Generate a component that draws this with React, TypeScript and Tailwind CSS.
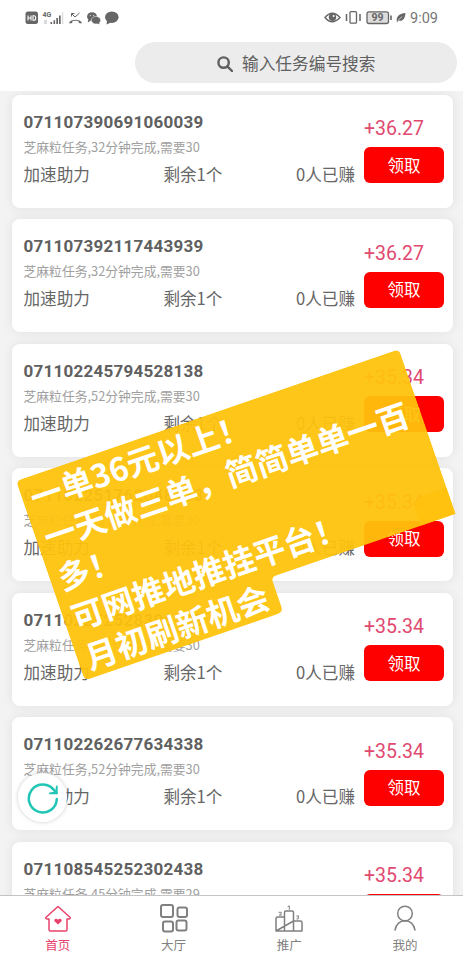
import type { ReactNode } from "react";
import clsx from "clsx";

interface Task {
  id: string;
  minutes: number;
  need: number;
  price: string;
}

const tasks: Task[] = [
  { id: "071107390691060039", minutes: 32, need: 30, price: "+36.27" },
  { id: "071107392117443939", minutes: 32, need: 30, price: "+36.27" },
  { id: "071102245794528138", minutes: 52, need: 30, price: "+35.34" },
  { id: "071102251762648138", minutes: 52, need: 30, price: "+35.34" },
  { id: "071102252528396138", minutes: 52, need: 30, price: "+35.34" },
  { id: "071102262677634338", minutes: 52, need: 30, price: "+35.34" },
  { id: "071108545252302438", minutes: 45, need: 29, price: "+35.34" },
];

function StatusBar() {
  return (
    <div className="flex h-[35px] shrink-0 items-center justify-between pl-[25px] pr-[25px] text-[#666]">
      <svg width="96" height="18" viewBox="0 0 96 18" fill="currentColor">
        <rect x="0.5" y="2.5" width="12.5" height="12.5" rx="2.5" />
        <path d="M3 6.5v5M6 6.5v5M3 9h3M8 6.7v4.6h1q1.7 0 1.7-2.3T9 6.7z" stroke="#fff" strokeWidth="1.1" fill="none" />
        <text x="17.5" y="7.500" fontSize="7" fontWeight="700" fontFamily="Roboto, sans-serif">4G</text>
        <path d="M25.5 13h1.6v2h-1.6zM28.5 11.3h1.6V15h-1.6zM31.3 9h1.7v6h-1.7zM34 6.5h1.7V15H34z" />
        <path d="M37 3h1.200v12H37zM19 11h3v4h-3z" opacity=".25" />
        <path d="M44.500 14.500c-.8-1 .4-2.200 2-3 2.500-1.100 5.500-1.100 8 0 1.600.8 2.800 2 2 3l-2.600-.6-.4-1.700c-2-.6-4-.6-6 0l-.4 1.700z" />
        <path d="M46.500 4.500l3.500 3.500 4.500-4M46.500 7.500v-3h3" fill="none" stroke="currentColor" strokeWidth="1" />
        <ellipse cx="67" cy="7.500" rx="5" ry="4.300" />
        <path d="M63.500 10l-.8 3.500 3-1.800z" />
        <ellipse cx="71" cy="11.200" rx="4.600" ry="3.800" stroke="#fff" strokeWidth=".5" />
        <path d="M72 14l2.500 1.600-.5-2.500z" />
        <circle cx="65.300" cy="6.600" r=".5" fill="#fff" />
        <circle cx="68.700" cy="6.600" r=".5" fill="#fff" />
        <ellipse cx="86.800" cy="8.200" rx="6.800" ry="5.800" />
        <path d="M82 11.500l-.5 4 4.500-2z" />
      </svg>
      <div className="flex items-center">
        <svg width="84" height="18" viewBox="0 0 84 18" fill="none" stroke="currentColor">
          <path d="M1 8.500q7-8.500 15 0-8 8.500-15 0z" strokeWidth="1.400" />
          <circle cx="8.500" cy="8.300" r="3.700" fill="currentColor" stroke="none" />
          <circle cx="9.600" cy="7" r="1" fill="#fff" stroke="none" />
          <rect x="26" y="2.700" width="6.500" height="11.500" rx="1" strokeWidth="1.300" />
          <path d="M22.500 5v7M36 5v7" strokeWidth="1.500" />
          <rect x="43" y="2.800" width="21.500" height="11.700" rx="2" fill="#ddd" strokeWidth="1.300" />
          <path d="M67 6.500v4.500" strokeWidth="1.600" />
          <text x="47.500" y="12.400" fontSize="10.500" fontWeight="700" fontFamily="Roboto, sans-serif" fill="currentColor" stroke="none">99</text>
          <path d="M73 13c-1.500-6 3-8.500 8.500-9-.3 5.500-3 9-7 7.500L72.500 14z" fill="currentColor" stroke="none" />
          <path d="M74 11.500l4-4" stroke="#fff" strokeWidth=".7" />
        </svg>
        <span className="ml-0.5 pt-[3px] font-[Roboto,sans-serif] text-[14.500px] leading-none text-[#777]">9:09</span>
      </div>
    </div>
  );
}

function SearchBar() {
  return (
    <div className="flex h-14 shrink-0 pl-[135px] pr-1.5 pt-[7px]">
      <div className="flex h-[41px] w-full items-center rounded-full bg-[#ececec] pl-[82px] text-[#606060]">
        <svg className="mt-0.5" width="16" height="16" viewBox="0 0 16 16" fill="none" stroke="currentColor" strokeWidth="2.400">
          <circle cx="6.600" cy="6.600" r="5.200" />
          <path d="M10.300 10.300l4.700 4.700" strokeLinecap="round" />
        </svg>
        <span className="ml-[9px] mt-0.5 whitespace-nowrap text-[16.700px]">输入任务编号搜索</span>
      </div>
    </div>
  );
}

function TaskCard({ task }: { task: Task }) {
  return (
    <div className="flex h-[113px] shrink-0 rounded-lg bg-white pl-[11.500px] shadow-[0_0_12px_rgba(0,0,0,0.08)]">
      <div className="w-[331.500px] pt-4">
        <div className="font-[Roboto,sans-serif] text-[17px] font-bold leading-[22px] tracking-[0.250px] text-[#606060]">{task.id}</div>
        <div className="mt-[5px] text-[12.800px] leading-[18px] text-[#a0a0a0]">
          芝麻粒任务,{task.minutes}分钟完成,需要{task.need}
        </div>
        <div className="mt-1.5 flex justify-between text-[16.600px] leading-6 text-[#666]">
          <span>加速助力</span>
          <span>剩余1个</span>
          <span>0人已赚</span>
        </div>
      </div>
      <div className="ml-[9px] w-20 pt-[22.500px]">
        <div className="font-[Roboto,sans-serif] text-[19.500px] leading-6 text-[#e04a70]">{task.price}</div>
        <button className="mt-1.5 flex h-9 w-20 items-center justify-center rounded-md bg-[#fe0000] text-[16.500px] text-white">
          领取
        </button>
      </div>
    </div>
  );
}

function PromoBanner() {
  return (
    <div className="absolute left-[15.500px] top-[481px] w-[405px] origin-top-left -rotate-[19deg] text-[32px] font-bold leading-[42.300px] text-white">
      <svg className="absolute left-0 top-0" width="405" height="212" viewBox="0 0 405 212">
        <path
          d="M6 0H399Q405 0 405 6V174H215Q210 174 210 179V205Q210 211 204 211H6Q0 211 0 205V6Q0 0 6 0z"
          fill="#ffc20c"
          fillOpacity=".94"
        />
        <path d="M368 160q0-14 14-14h23v28h-37z" fill="#ffc20c" fillOpacity=".7" />
      </svg>
      <div className="relative -mt-px whitespace-nowrap pl-[8.500px]">
        <p>一单36元以上！</p>
        <p>一天做三单，简简单单一百</p>
        <p>多！</p>
        <p>可网推地推挂平台！</p>
        <p>月初刷新机会</p>
      </div>
    </div>
  );
}

function NavItem({ label, active, children }: { label: string; active?: boolean; children: ReactNode }) {
  return (
    <div className={clsx("flex flex-1 flex-col items-center pt-[7px]", active ? "text-[#e8416b]" : "text-[#808080]")}>
      <svg width="30" height="30" viewBox="0 0 30 30" fill="none" stroke="currentColor" strokeWidth="1.500" strokeLinejoin="round" strokeLinecap="round">
        {children}
      </svg>
      <span className="mt-[3px] text-[12.500px] leading-[18px]">{label}</span>
    </div>
  );
}

function BottomNav() {
  return (
    <nav className="absolute inset-x-0 bottom-0 flex h-[65px] border-t border-[#c4c4c4] bg-white">
      <NavItem label="首页" active>
        <path d="M15 3.500L2.800 14.500Q2.500 16 4 16H6V26.500Q6 28 7.500 28H22.500Q24 28 24 26.500V16H26Q27.500 16 27.200 14.500z" />
        <path d="M15 21.500l-3.500-3.300c-1-2.500 2-3.300 3.500-1.500 1.500-1.800 4.500-1 3.500 1.500z" fill="currentColor" stroke="none" />
      </NavItem>
      <NavItem label="大厅">
        <g strokeWidth="2">
          <rect x="2" y="2" width="12" height="12" rx="2" />
          <rect x="18.500" y="4.500" width="9.500" height="9.500" rx="2" />
          <rect x="4" y="18.500" width="10" height="10" rx="2" />
          <rect x="17.500" y="17.500" width="10" height="10" rx="2" />
        </g>
      </NavItem>
      <NavItem label="推广">
        <path d="M2 28V15.500Q2 14 3.500 14H10.500V28M10.500 28V9.500Q10.500 8 12 8H18Q19.500 8 19.500 9.500V28M19.500 18H26.500Q28 18 28 19.500V28H2z" />
        <path d="M5 9.300h2.200v1.200L5.300 12h2.200M14 3.500l1.300-.7v3.500M22.800 13h2l-1 1.300q1.500.3.500 1.500l-1.500.1" strokeWidth="1" />
      </NavItem>
      <NavItem label="我的">
        <circle cx="15" cy="10.500" r="7.300" />
        <path d="M5 27Q7 18 15 17.800Q23 18 25 27" />
      </NavItem>
    </nav>
  );
}

export default function App() {
  return (
    <div className="relative flex h-[960px] w-[463px] flex-col overflow-hidden bg-white font-['Noto_Sans_CJK_SC',sans-serif]">
      <StatusBar />
      <SearchBar />
      <main className="flex flex-1 flex-col gap-[11.500px] overflow-hidden bg-[#f3f3f3] pl-3 pr-2.5 pt-[3.500px]">
        {tasks.map((task) => (
          <TaskCard key={task.id} task={task} />
        ))}
      </main>
      <PromoBanner />
      <div className="absolute left-[18px] top-[773px] flex size-[49px] items-center justify-center rounded-full bg-white shadow-[0_0_4px_rgba(0,0,0,0.2)]">
        <svg width="34" height="34" viewBox="0 0 34 34" fill="none" stroke="#20c5b5" strokeWidth="2.500" strokeLinecap="round" strokeLinejoin="round">
          <path d="M30.800 18A14 14 0 1 1 28.300 9.500L30.500 12" />
          <path d="M30.800 5.500V12.300H23.800L30 11.500z" fill="#20c5b5" strokeWidth="1.800" />
        </svg>
      </div>
      <BottomNav />
    </div>
  );
}
